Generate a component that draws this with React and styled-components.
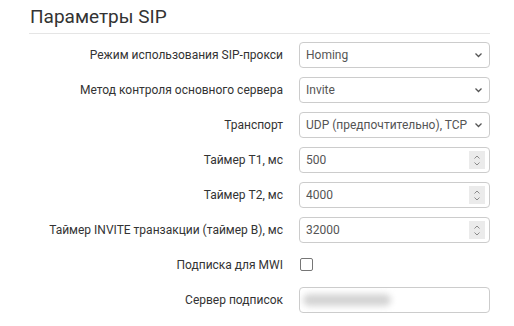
import React from 'react';
import styled, { createGlobalStyle } from 'styled-components';

const GlobalStyle = createGlobalStyle`
  body {
    margin: 0;
    background: #fff;
    font-family: Roboto, "Liberation Sans", Arial, sans-serif;
    color: #333;
  }
`;

const Panel = styled.div`
  width: 461px;
  margin-left: 29px;
`;

const Title = styled.h3`
  margin: 0;
  padding: 5px 0 0 1px;
  height: 28px;
  font-size: 19px;
  font-weight: 400;
  line-height: 24px;
  color: #333;
  border-bottom: 1px solid #e5e5e5;
`;

const Form = styled.div`
  display: grid;
  grid-template-columns: 254px 191px;
  column-gap: 16px;
  row-gap: 9px;
  padding-top: 8px;
`;

const Label = styled.label`
  display: flex;
  align-items: center;
  justify-content: flex-end;
  height: 26px;
  font-size: 12px;
  color: #333;
  white-space: nowrap;
`;

const Field = styled.div`
  position: relative;
  display: flex;
  align-items: center;
  box-sizing: border-box;
  height: 26px;
  padding: 0 6px;
  border: 1px solid ${(p) => (p.$bare ? 'transparent' : '#ccc')};
  border-radius: 4px;
  background: #fff;
  font-size: 12px;
  color: #555;
  white-space: nowrap;
  overflow: hidden;
`;

const Value = styled.span`
  flex: 1;
  overflow: hidden;
`;

const Spinner = styled.span`
  display: flex;
  flex-direction: column;
  align-items: center;
  justify-content: center;
  width: 16px;
  height: 18px;
  margin-right: -2px;
  background: #ebebeb;
`;

const Check = styled.span`
  display: block;
  width: 11px;
  height: 11px;
  margin-left: -6px;
  margin-top: -2px;
  border: 1px solid #767676;
  border-radius: 2px;
  background: #fff;
`;

const Blur = styled.span`
  display: block;
  width: 88px;
  height: 12px;
  margin-left: -3px;
  border-radius: 6px;
  background: #d4d4d4;
  filter: blur(3px);
`;

const Chevron = () => (
  <svg width="9" height="6" viewBox="0 0 9 6">
    <path d="M1.5 1.5 L4.5 4.5 L7.5 1.5" fill="none" stroke="#555" strokeWidth="1.3" />
  </svg>
);

const SpinArrows = () => (
  <svg width="8" height="13" viewBox="0 0 8 13">
    <path d="M1.5 4.5 L4 2 L6.5 4.5 M1.5 8.5 L4 11 L6.5 8.5" fill="none" stroke="#8a8a8a" strokeWidth="1" />
  </svg>
);

const rows = [
  { label: 'Режим использования SIP-прокси', type: 'select', value: 'Homing' },
  { label: 'Метод контроля основного сервера', type: 'select', value: 'Invite' },
  { label: 'Транспорт', type: 'select', value: 'UDP (предпочтительно), TCP' },
  { label: 'Таймер T1, мс', type: 'number', value: '500' },
  { label: 'Таймер T2, мс', type: 'number', value: '4000' },
  { label: 'Таймер INVITE транзакции (таймер B), мс', type: 'number', value: '32000' },
  { label: 'Подписка для MWI', type: 'check' },
  { label: 'Сервер подписок', type: 'text' },
];

const Control = ({ type, value }) => {
  if (type === 'check') {
    return (
      <Field $bare>
        <Check />
      </Field>
    );
  }
  if (type === 'text') {
    return (
      <Field>
        <Blur />
      </Field>
    );
  }
  return (
    <Field>
      <Value>{value}</Value>
      {type === 'select' ? <Chevron /> : (
        <Spinner>
          <SpinArrows />
        </Spinner>
      )}
    </Field>
  );
};

const App = () => (
  <>
    <GlobalStyle />
    <Panel>
      <Title>Параметры SIP</Title>
      <Form>
        {rows.map((r) => (
          <React.Fragment key={r.label}>
            <Label>{r.label}</Label>
            <Control type={r.type} value={r.value} />
          </React.Fragment>
        ))}
      </Form>
    </Panel>
  </>
);

export default App;
